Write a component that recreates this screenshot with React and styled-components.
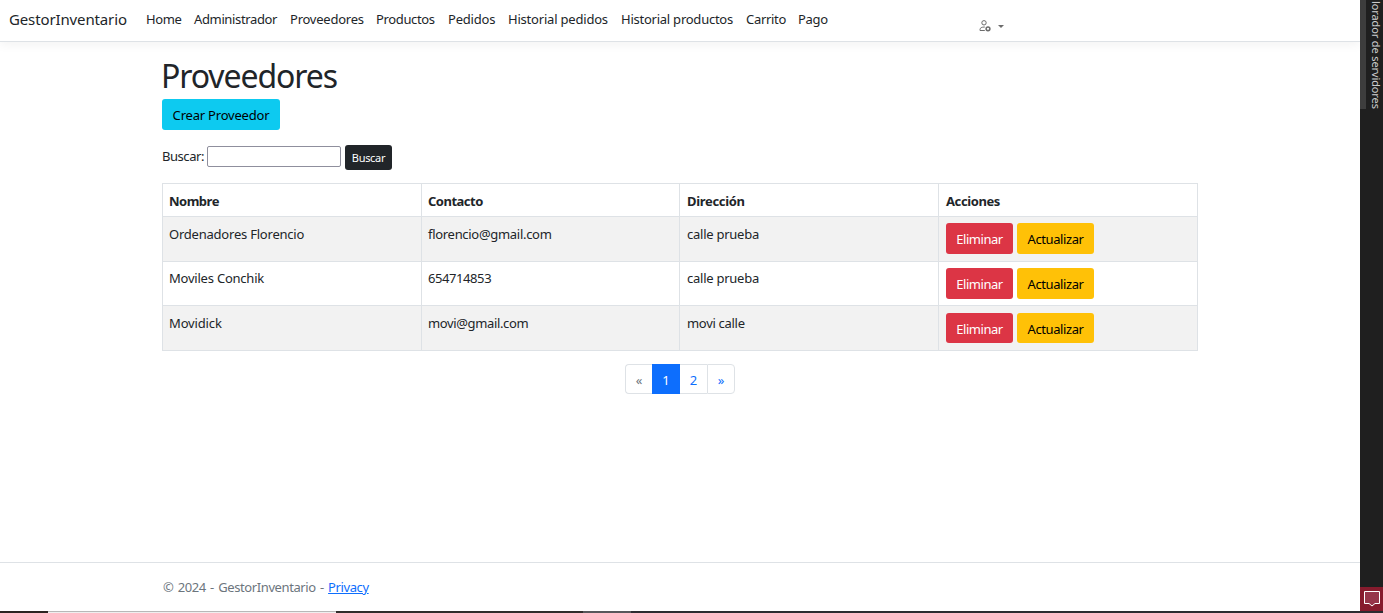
import React from "react";
import styled, { createGlobalStyle } from "styled-components";

const GlobalStyle = createGlobalStyle`
  * { box-sizing: border-box; }
  body {
    margin: 0;
    background: #fff;
    color: #212529;
    font: 13px/19px "Noto Sans", "Open Sans", sans-serif;
    overflow: hidden;
  }
`;

const Desktop = styled.div`
  display: grid;
  grid-template: 611px 2px / 1360px 23px;
  width: 1383px;
  height: 613px;
`;
const Page = styled.div`
  display: flex;
  flex-direction: column;
  min-width: 0;
`;
const Navbar = styled.header`
  display: flex;
  align-items: flex-start;
  height: 42px;
  padding: 10px 0 0 9px;
  border-bottom: 1px solid #dee2e6;
  box-shadow: 0 3px 10px rgba(0, 0, 0, 0.05);
`;
const Brand = styled.a`
  width: 137px;
  font-size: 15px;
  letter-spacing: -0.13px;
  white-space: nowrap;
`;
const Nav = styled.nav`
  display: flex;
  width: 833px;
`;
const NavLink = styled.a`
  flex: 0 0 ${(p) => p.$w}px;
  letter-spacing: ${(p) => p.$ls || 0}px;
  white-space: nowrap;
`;
const UserMenu = styled.button`
  display: flex;
  align-items: center;
  gap: 7px;
  height: 12px;
  margin-top: 10px;
  padding: 0;
  border: 0;
  background: none;
  color: #6c6c6c;
`;
const Caret = styled.span`
  border: 3px solid transparent;
  border-top-color: currentColor;
  border-bottom: 0;
`;
const Main = styled.main`
  flex: 1;
  width: 1036px;
  margin-left: 162px;
`;
const Title = styled.h1`
  margin: 15px 0 4px -1px;
  font-size: 32px;
  font-weight: 400;
  line-height: 38px;
  letter-spacing: -1.1px;
`;
const colors = {
  info: ["#0dcaf0", "#000"],
  dark: ["#212529", "#fff"],
  danger: ["#dc3545", "#fff"],
  warning: ["#ffc107", "#000"],
};
const Button = styled.button`
  display: block;
  width: ${(p) => p.$w}px;
  height: ${(p) => p.$h || 31}px;
  padding: ${(p) => (p.$small ? 0 : 2)}px 0 0;
  border: 0;
  border-radius: 3px;
  background: ${(p) => colors[p.$kind][0]};
  color: ${(p) => colors[p.$kind][1]};
  font: ${(p) => (p.$small ? 11 : 13)}px/19px "Noto Sans", sans-serif;
  letter-spacing: ${(p) => p.$ls || 0}px;
  white-space: nowrap;
`;
const Search = styled.form`
  display: flex;
  align-items: flex-start;
  height: 25px;
  margin: 15px 0 13px;
`;
const Label = styled.label`
  width: 45px;
  padding-top: 2px;
  letter-spacing: -0.45px;
`;
const Input = styled.input`
  width: 134px;
  height: 21px;
  margin: 1px 4px 0 0;
  border: 1px solid #8f8f9d;
  border-radius: 2px;
`;
const Table = styled.div`
  border: 1px solid #dee2e6;
  border-bottom: 0;
`;
const Row = styled.div`
  display: grid;
  grid-template-columns: 259px 258px 259px 258px;
  height: ${(p) => p.$h}px;
  border-bottom: 1px solid #dee2e6;
  background: ${(p) => (p.$striped ? "#f2f2f2" : "#fff")};
  font-weight: ${(p) => (p.$head ? 700 : 400)};
`;
const Cell = styled.div`
  display: flex;
  align-items: flex-start;
  gap: 4px;
  padding: ${(p) => p.$top || 8}px 0 0 ${(p) => p.$left || 6}px;
  border-right: 1px solid #dee2e6;
  letter-spacing: ${(p) => p.$ls || 0}px;
  &:last-child { border-right: 0; }
`;
const Pagination = styled.ul`
  display: flex;
  width: 110px;
  height: 30px;
  margin: 13px auto 0;
  padding: 0;
  list-style: none;
`;
const PageItem = styled.li`
  flex: 0 0 ${(p) => p.$w}px;
  height: 30px;
  padding-top: 6px;
  border: 1px solid ${(p) => (p.$active ? "#0d6efd" : "#dee2e6")};
  border-right-width: ${(p) => (p.$open ? 0 : 1)}px;
  background: ${(p) => (p.$active ? "#0d6efd" : "#fff")};
  color: ${(p) => (p.$active ? "#fff" : p.$disabled ? "#6c757d" : "#0d6efd")};
  text-align: center;
  &:first-child { border-radius: 4px 0 0 4px; }
  &:last-child { border-radius: 0 4px 4px 0; }
  &:nth-child(3) { border-left: 0; }
`;
const Footer = styled.footer`
  height: 49px;
  padding: 15px 0 0 163px;
  border-top: 1px solid #dee2e6;
  color: #6c757d;
  letter-spacing: -0.4px;
  word-spacing: 1.3px;
`;
const PrivacyLink = styled.a`
  color: #0d6efd;
  text-decoration: underline;
`;
const SideDock = styled.aside`
  display: flex;
  flex-direction: column;
  justify-content: space-between;
  background: #1f1f1f;
`;
const DockTab = styled.div`
  display: flex;
  justify-content: flex-end;
  align-items: flex-end;
  width: 23px;
  height: 109px;
  border-left: 6px solid #3d3d3d;
  color: #d0d0d0;
  font-size: 11px;
  line-height: 14px;
  letter-spacing: -0.12px;
  white-space: nowrap;
  span { writing-mode: vertical-rl; }
`;
const Feedback = styled.div`
  height: 24px;
  background: #861b2d;
  svg { display: block; }
`;
const Taskbar = styled.div`
  grid-column: 1 / -1;
  display: flex;
`;
const TaskSegment = styled.i`
  flex: ${(p) => (p.$w ? `0 0 ${p.$w}px` : 1)};
  background: ${(p) => p.$color};
  border-top: 1px solid ${(p) => p.$edge || p.$color};
`;

const links = [
  ["Home", 48, -0.4], ["Administrador", 96, -0.36], ["Proveedores", 86, -0.24],
  ["Productos", 72, -0.35], ["Pedidos", 60, -0.2], ["Historial pedidos", 113, -0.2],
  ["Historial productos", 125, -0.24], ["Carrito", 52, -0.3], ["Pago", 36, -0.3],
];
const headings = [
  ["Nombre", -0.5, 6], ["Contacto", -0.5, 6], ["Dirección", -0.33, 7], ["Acciones", -0.4, 7],
];
const suppliers = [
  { h: 45, top: 8, btnTop: 6, btnH: 31, cells: [["Ordenadores Florencio", -0.22], ["florencio@gmail.com", -0.3], ["calle prueba", -0.25]] },
  { h: 44, top: 7, btnTop: 6, btnH: 31, cells: [["Moviles Conchik", -0.22], ["654714853", -0.42], ["calle prueba", -0.25]] },
  { h: 45, top: 8, btnTop: 7, btnH: 30, cells: [["Movidick", -0.15], ["movi@gmail.com", -0.36], ["movi calle", -0.3]] },
];

export default function App() {
  return (
    <Desktop>
      <GlobalStyle />
      <Page>
        <Navbar>
          <Brand>GestorInventario</Brand>
          <Nav>
            {links.map(([text, w, ls]) => <NavLink key={text} $w={w} $ls={ls}>{text}</NavLink>)}
          </Nav>
          <UserMenu aria-label="Usuario">
            <svg width="12" height="12" viewBox="0 0 12 12" fill="none" stroke="currentColor">
              <circle cx="5" cy="2.8" r="2.2" />
              <path d="M5.8 10.5H1V9.6Q1 7 5.8 7" />
              <circle cx="9" cy="8.8" r="1.9" strokeWidth="1.5" />
            </svg>
            <Caret />
          </UserMenu>
        </Navbar>
        <Main>
          <Title>Proveedores</Title>
          <Button $kind="info" $w={118} $ls={-0.2}>Crear Proveedor</Button>
          <Search>
            <Label>Buscar:</Label>
            <Input aria-label="Buscar" />
            <Button type="button" $kind="dark" $w={47} $h={25} $ls={-0.3} $small>Buscar</Button>
          </Search>
          <Table>
            <Row $h={33} $head>
              {headings.map(([text, ls, left]) => <Cell key={text} $ls={ls} $left={left}>{text}</Cell>)}
            </Row>
            {suppliers.map((s, i) => (
              <Row key={i} $h={s.h} $striped={i % 2 === 0}>
                {s.cells.map(([text, ls], c) => (
                  <Cell key={c} $ls={ls} $top={s.top} $left={c === 2 ? 7 : 6}>{text}</Cell>
                ))}
                <Cell $left={7} $top={s.btnTop}>
                  <Button $kind="danger" $w={67} $h={s.btnH} $ls={-0.45}>Eliminar</Button>
                  <Button $kind="warning" $w={77} $h={s.btnH} $ls={-0.4}>Actualizar</Button>
                </Cell>
              </Row>
            ))}
          </Table>
          <Pagination>
            <PageItem $w={27} $disabled $open>«</PageItem>
            <PageItem $w={28} $active>1</PageItem>
            <PageItem $w={27} $open>2</PageItem>
            <PageItem $w={28}>»</PageItem>
          </Pagination>
        </Main>
        <Footer>© 2024 - GestorInventario - <PrivacyLink>Privacy</PrivacyLink></Footer>
      </Page>
      <SideDock>
        <DockTab><span>lorador de servidores</span></DockTab>
        <Feedback>
          <svg width="23" height="24" viewBox="0 0 23 24">
            <path d="M4.5 4.5h15v12H15L12 19l-3-2.5H4.5z" fill="#96364a" stroke="#fff" />
          </svg>
        </Feedback>
      </SideDock>
      <Taskbar>
        <TaskSegment $w={48} $color="#2b2421" />
        <TaskSegment $w={288} $color="#efefef" $edge="#b8b8b8" />
        <TaskSegment $w={247} $color="#302d2b" />
        <TaskSegment $w={48} $color="#57575b" />
        <TaskSegment $color="#2d2c31" />
      </Taskbar>
    </Desktop>
  );
}
